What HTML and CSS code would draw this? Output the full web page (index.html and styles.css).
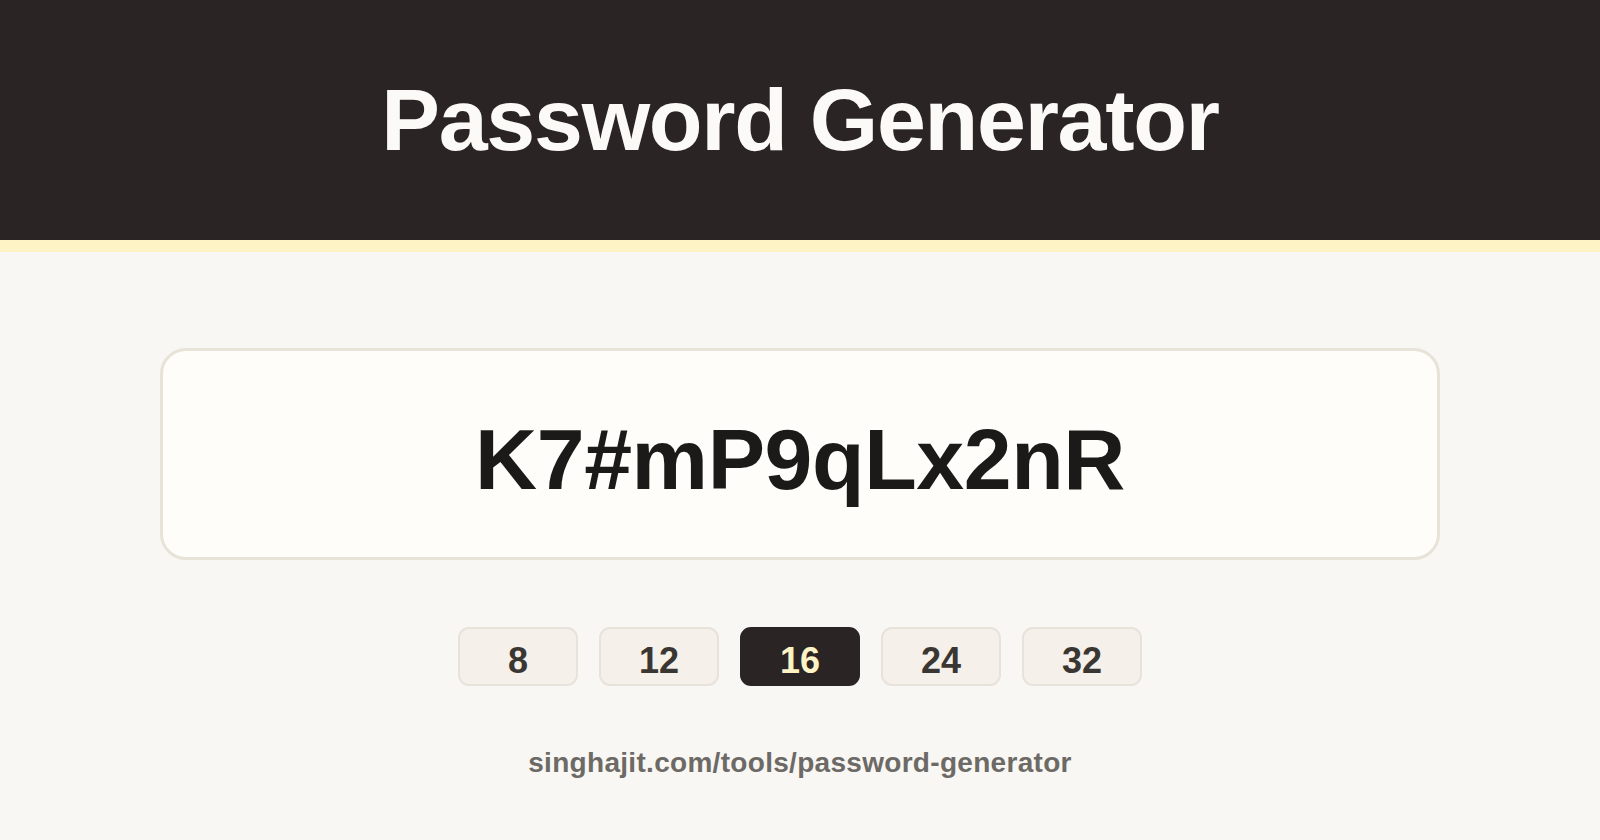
FILE: index.html
```html
<!DOCTYPE html>
<html>
<head>
<meta charset="utf-8">
<link rel="stylesheet" href="styles.css">
</head>
<body>
<header class="header"><h1 class="title">Password Generator</h1></header>
<main class="main">
  <div class="card"><div class="password">K7#mP9qLx2nR</div></div>
  <div class="lengths">
    <div class="len">8</div>
    <div class="len">12</div>
    <div class="len active">16</div>
    <div class="len">24</div>
    <div class="len">32</div>
  </div>
  <div class="url">singhajit.com/tools/password-generator</div>
</main>
</body>
</html>
```
FILE: styles.css
```css
* { box-sizing: border-box; }
html, body { margin: 0; padding: 0; }
body {
  width: 1600px;
  height: 840px;
  background: #f8f7f3;
  font-family: "Liberation Sans", Arial, sans-serif;
  overflow: hidden;
}
.header {
  height: 252px;
  background: #2a2424;
  border-bottom: 12px solid #fdf3c4;
  display: flex;
  align-items: center;
  justify-content: center;
}
.title {
  margin: 0;
  color: #fbfaf6;
  font-size: 88px;
  font-weight: 700;
  letter-spacing: -1.3px;
  line-height: 1;
}
.main {
  display: flex;
  flex-direction: column;
  align-items: center;
  padding-top: 96px;
}
.card {
  width: 1280px;
  height: 212px;
  background: #fefdf9;
  border: 3px solid #e7e3d9;
  border-radius: 26px;
  display: flex;
  align-items: center;
  justify-content: center;
  padding-top: 10px;
}
.password {
  font-size: 86px;
  font-weight: 700;
  color: #1c1a18;
  letter-spacing: -0.4px;
  line-height: 1;
}
.lengths {
  display: flex;
  gap: 21px;
  margin-top: 67px;
}
.len {
  width: 120px;
  height: 59px;
  border: 2px solid #e8e3da;
  background: #f5f0ea;
  border-radius: 11px;
  display: flex;
  align-items: center;
  justify-content: center;
  font-size: 36px;
  font-weight: 700;
  color: #3a3632;
  padding-top: 8px;
}
.len.active {
  background: #2a2424;
  border-color: #2a2424;
  color: #fdf3c4;
}
.url {
  margin-top: 61px;
  font-size: 28px;
  font-weight: 700;
  color: #6d6a66;
  line-height: 32px;
  letter-spacing: 0.3px;
}
```
